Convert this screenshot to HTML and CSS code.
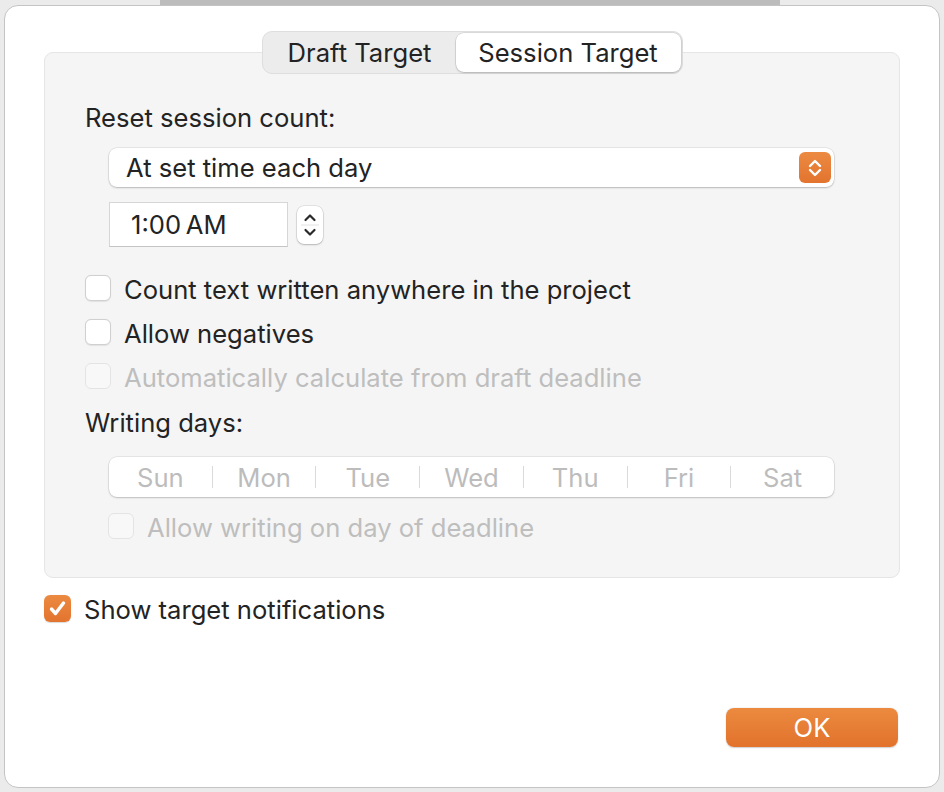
FILE: index.html
```html
<!DOCTYPE html>
<html>
<head>
<meta charset="utf-8">
<link rel="stylesheet" href="styles.css">
</head>
<body>
<div class="strip"></div>
<div class="window">
  <div class="tabs">
    <div class="tab draft">Draft Target</div>
    <div class="tab active">Session Target</div>
  </div>
  <div class="group">
    <div class="label">Reset session count:</div>
    <div class="indent">
      <div class="popup">
        <span class="popup-text">At set time each day</span>
        <span class="popup-arrows">
          <svg width="32" height="31" viewBox="0 0 32 31"><path d="M11 14 L16 9 L21 14" fill="none" stroke="#fff" stroke-width="2.4" stroke-linecap="round" stroke-linejoin="round"/><path d="M11 18 L16 23 L21 18" fill="none" stroke="#fff" stroke-width="2.4" stroke-linecap="round" stroke-linejoin="round"/></svg>
        </span>
      </div>
      <div class="time-row">
        <div class="time-field">1:00&#8201;AM</div>
        <div class="stepper">
          <svg width="26" height="38" viewBox="0 0 26 38"><path d="M8.5 14 L13 9.5 L17.5 14" fill="none" stroke="#2a2a2a" stroke-width="2.2" stroke-linecap="round" stroke-linejoin="round"/><line x1="4" y1="19" x2="22" y2="19" stroke="#e2e2e2" stroke-width="1"/><path d="M8.5 24 L13 28.5 L17.5 24" fill="none" stroke="#2a2a2a" stroke-width="2.2" stroke-linecap="round" stroke-linejoin="round"/></svg>
        </div>
      </div>
    </div>
    <div class="check-row first"><span class="cb"></span><span>Count text written anywhere in the project</span></div>
    <div class="check-row"><span class="cb"></span><span>Allow negatives</span></div>
    <div class="check-row disabled"><span class="cb"></span><span>Automatically calculate from draft deadline</span></div>
    <div class="label days-label">Writing days:</div>
    <div class="indent">
      <div class="days">
        <span class="day">Sun</span><span class="sep"></span>
        <span class="day">Mon</span><span class="sep"></span>
        <span class="day">Tue</span><span class="sep"></span>
        <span class="day">Wed</span><span class="sep"></span>
        <span class="day">Thu</span><span class="sep"></span>
        <span class="day">Fri</span><span class="sep"></span>
        <span class="day">Sat</span>
      </div>
      <div class="check-row disabled deadline"><span class="cb"></span><span>Allow writing on day of deadline</span></div>
    </div>
  </div>
  <div class="check-row notif"><span class="cb checked"><svg width="27" height="27" viewBox="0 0 27 27"><path d="M7.5 14 L11.5 18.5 L19.5 8" fill="none" stroke="#fff" stroke-width="3.4" stroke-linecap="round" stroke-linejoin="round"/></svg></span><span>Show target notifications</span></div>
  <div class="footer">
    <button class="ok">OK</button>
  </div>
</div>
</body>
</html>
```
FILE: styles.css
```css
* { box-sizing: border-box; }
html, body { margin: 0; padding: 0; }
body {
  width: 944px;
  height: 792px;
  background: #ebebeb;
  font-family: "Inter", "Roboto", sans-serif;
  font-size: 25.6px;
  color: #232323;
  overflow: hidden;
}
.strip {
  height: 5px;
  width: 620px;
  margin-left: 160px;
  background: #bcbcbc;
}
.window {
  width: 936px;
  height: 783px;
  margin-left: 4px;
  background: #fff;
  border: 1px solid #c4c4c4;
  border-radius: 14px;
  padding: 25px 39px 0 39px;
  display: flex;
  flex-direction: column;
}
.tabs {
  position: relative;
  z-index: 1;
  align-self: center;
  display: flex;
  height: 43px;
  padding: 1px;
  margin-bottom: -22px;
  background: #ececec;
  border: 1px solid #dedede;
  border-radius: 10px;
}
.tab {
  height: 39px;
  display: flex;
  align-items: center;
  justify-content: center;
  line-height: 1;
  border-radius: 8px;
}
.tab.draft { width: 192px; }
.tab.active {
  width: 225px;
  background: #fff;
  box-shadow: 0 0 0 0.5px rgba(0,0,0,0.14), 0 1px 2px rgba(0,0,0,0.18);
}
.group {
  background: #f5f5f5;
  border: 1px solid #e5e5e5;
  border-radius: 9px;
  padding: 50px 40px 28px 40px;
}
.label {
  height: 30px;
  line-height: 30px;
}
.indent {
  margin-left: 24px;
  width: 725px;
}
.popup {
  margin-top: 15px;
  height: 39px;
  background: #fff;
  border-radius: 8px;
  box-shadow: 0 0 0 0.5px rgba(0,0,0,0.12), 0 1px 2px rgba(0,0,0,0.2);
  display: flex;
  align-items: center;
  justify-content: space-between;
  padding: 0 3px 0 17px;
}
.popup-arrows {
  width: 32px;
  height: 31px;
  border-radius: 6px;
  background: linear-gradient(#ec8a42, #e2742e);
  display: flex;
}
.time-row {
  margin-top: 15px;
  display: flex;
  align-items: center;
  gap: 9px;
}
.time-field {
  width: 179px;
  height: 45px;
  background: #fff;
  border: 1px solid #d6d6d6;
  border-bottom-color: #c4c4c4;
  display: flex;
  align-items: center;
  padding-left: 21px;
}
.stepper {
  width: 26px;
  height: 38px;
  background: #fff;
  border-radius: 7px;
  box-shadow: 0 0 0 0.5px rgba(0,0,0,0.14), 0 1px 2px rgba(0,0,0,0.2);
  display: flex;
}
.check-row {
  height: 44px;
  display: flex;
  align-items: center;
  gap: 13px;
}
.check-row.first { margin-top: 20px; }
.cb {
  width: 26px;
  height: 26px;
  flex: none;
  border-radius: 6px;
  background: #fff;
  border: 1px solid #d0d0d0;
  box-shadow: 0 0.5px 1px rgba(0,0,0,0.08);
  margin-top: -2px;
}
.check-row.disabled { color: #bebebe; }
.check-row.disabled .cb {
  background: #f8f8f8;
  border-color: #e4e4e4;
  box-shadow: none;
}
.days-label { margin-top: 9px; }
.days {
  margin-top: 19px;
  height: 40px;
  background: #fff;
  border-radius: 8px;
  box-shadow: 0 0 0 0.5px rgba(0,0,0,0.12), 0 1px 2px rgba(0,0,0,0.18);
  display: flex;
  align-items: center;
  color: #bcbcbc;
}
.day {
  flex: 1;
  text-align: center;
}
.sep {
  width: 1px;
  height: 22px;
  background: #dadada;
}
.check-row.deadline {
  margin-top: 8px;
  margin-left: -1px;
}
.check-row.notif {
  margin-top: 9px;
}
.cb.checked {
  width: 27px;
  height: 27px;
  border: none;
  background: linear-gradient(#ec8a42, #e2742e);
  box-shadow: 0 0.5px 1px rgba(0,0,0,0.15);
  display: flex;
}
.footer {
  margin-top: auto;
  display: flex;
  justify-content: flex-end;
  padding: 0 2px 40px 0;
}
.ok {
  width: 172px;
  height: 39px;
  border: none;
  border-radius: 8px;
  background: linear-gradient(#eb8a40, #e2722c);
  box-shadow: 0 0.5px 1.5px rgba(0,0,0,0.2);
  color: #fff;
  font-family: "Inter", "Roboto", sans-serif;
  font-size: 25.6px;
  padding: 0;
}
```
